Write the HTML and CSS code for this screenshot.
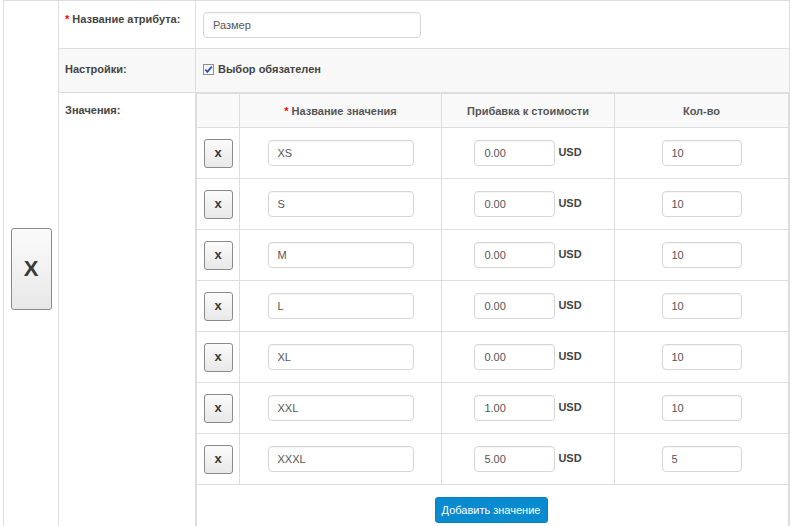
FILE: index.html
```html
<!DOCTYPE html>
<html lang="ru">
<head>
<meta charset="utf-8">
<title>Атрибут</title>
<link rel="stylesheet" href="styles.css">
</head>
<body>
<div class="page">
<table class="form">
  <colgroup><col class="c-del"><col class="c-label"><col class="c-field"></colgroup>
  <tbody>
    <tr class="row-name">
      <td class="del-cell" rowspan="3"><button class="btn btn-big" type="button">X</button></td>
      <td class="label"><span class="req">*</span> Название атрибута:</td>
      <td class="field"><input class="inp inp-attr" type="text" value="Размер"></td>
    </tr>
    <tr class="row-settings">
      <td class="label">Настройки:</td>
      <td class="field"><label class="check"><span class="checkbox"><svg width="9" height="9" viewBox="0 0 9 9"><path d="M1.3 4.6 L3.4 6.8 L7.8 1.6" fill="none" stroke="#2454c4" stroke-width="1.8"/></svg></span>Выбор обязателен</label></td>
    </tr>
    <tr class="row-values">
      <td class="label">Значения:</td>
      <td class="field values-cell">
        <table class="values">
          <colgroup><col class="v-del"><col class="v-name"><col class="v-price"><col class="v-qty"></colgroup>
          <thead>
            <tr><th></th><th><span class="req">*</span> Название значения</th><th>Прибавка к стоимости</th><th>Кол-во</th></tr>
          </thead>
          <tbody>
            <tr><td><button class="btn btn-small" type="button">x</button></td><td><input class="inp inp-name" type="text" value="XS"></td><td><span class="price"><input class="inp inp-price" type="text" value="0.00"><b>USD</b></span></td><td><input class="inp inp-qty" type="text" value="10"></td></tr>
            <tr><td><button class="btn btn-small" type="button">x</button></td><td><input class="inp inp-name" type="text" value="S"></td><td><span class="price"><input class="inp inp-price" type="text" value="0.00"><b>USD</b></span></td><td><input class="inp inp-qty" type="text" value="10"></td></tr>
            <tr><td><button class="btn btn-small" type="button">x</button></td><td><input class="inp inp-name" type="text" value="M"></td><td><span class="price"><input class="inp inp-price" type="text" value="0.00"><b>USD</b></span></td><td><input class="inp inp-qty" type="text" value="10"></td></tr>
            <tr><td><button class="btn btn-small" type="button">x</button></td><td><input class="inp inp-name" type="text" value="L"></td><td><span class="price"><input class="inp inp-price" type="text" value="0.00"><b>USD</b></span></td><td><input class="inp inp-qty" type="text" value="10"></td></tr>
            <tr><td><button class="btn btn-small" type="button">x</button></td><td><input class="inp inp-name" type="text" value="XL"></td><td><span class="price"><input class="inp inp-price" type="text" value="0.00"><b>USD</b></span></td><td><input class="inp inp-qty" type="text" value="10"></td></tr>
            <tr><td><button class="btn btn-small" type="button">x</button></td><td><input class="inp inp-name" type="text" value="XXL"></td><td><span class="price"><input class="inp inp-price" type="text" value="1.00"><b>USD</b></span></td><td><input class="inp inp-qty" type="text" value="10"></td></tr>
            <tr><td><button class="btn btn-small" type="button">x</button></td><td><input class="inp inp-name" type="text" value="XXXL"></td><td><span class="price"><input class="inp inp-price" type="text" value="5.00"><b>USD</b></span></td><td><input class="inp inp-qty" type="text" value="5"></td></tr>
          </tbody>
          <tfoot>
            <tr><td></td><td class="add-cell" colspan="3"><button class="btn-add" type="button">Добавить значение</button></td></tr>
          </tfoot>
        </table>
      </td>
    </tr>
  </tbody>
</table>
</div>
</body>
</html>
```
FILE: styles.css
```css
* { box-sizing: border-box; }
html, body { margin: 0; padding: 0; background: #fff; }
body {
  font-family: "Liberation Sans", Arial, sans-serif;
  font-size: 11px;
  color: #444;
}
.page { padding-left: 3px; }

.form {
  border-collapse: collapse;
  table-layout: fixed;
  width: 786px;
}
.c-del { width: 55px; }
.c-label { width: 137px; }
.c-field { width: 594px; }

.form > tbody > tr > td {
  border: 1px solid #dddddd;
  vertical-align: top;
  padding: 0;
}
.form .label {
  font-weight: bold;
  line-height: 15px;
  padding: 11px 6px 0;
}
.form .field { padding: 11px 7px 10px; }

.row-settings > td.label,
.row-settings > td.field { background: #f8f8f8; padding-top: 13px; padding-bottom: 15px; }
.row-values > td.label { padding-top: 10px; }
.form .values-cell { padding: 0; }

.del-cell { text-align: center; vertical-align: middle !important; }

.req { color: #ff0000; }

.btn {
  font-family: "Liberation Sans", Arial, sans-serif;
  font-weight: bold;
  color: #3a3a3a;
  border: 1px solid #8a8a8a;
  border-radius: 3px;
  background: linear-gradient(#fbfbfb, #e8e8e8);
  padding: 0;
  cursor: pointer;
}
.btn-big { width: 41px; height: 82px; font-size: 22px; }
.btn-small { width: 29px; height: 29px; font-size: 13px; line-height: 24px; }

.inp {
  font-family: "Liberation Sans", Arial, sans-serif;
  font-size: 11px;
  color: #555;
  height: 26px;
  border: 1px solid #d6d6d6;
  border-radius: 4px;
  padding: 0 9px;
  background: #fff;
  box-shadow: inset 0 1px 1px rgba(0,0,0,0.04);
  outline: none;
}
.inp-attr { width: 218px; display: block; }
.inp-name { width: 146px; }
.inp-price { width: 81px; }
.inp-qty { width: 80px; }

.check {
  display: flex;
  align-items: center;
  gap: 4px;
  font-weight: bold;
  line-height: 15px;
}
.checkbox {
  width: 11px;
  height: 11px;
  border: 1px solid #8e8f8f;
  background: linear-gradient(#f4f4f4, #ffffff);
  display: flex;
  align-items: center;
  justify-content: center;
}

.values {
  width: 100%;
  border-collapse: collapse;
  table-layout: fixed;
  border: 1px solid #dddddd;
}
.v-del { width: 43px; }
.v-name { width: 202px; }
.v-price { width: 173px; }
.v-qty { width: 174px; }

.values th {
  background: #f9f9f9;
  border: 1px solid #dddddd;
  height: 34px;
  font-weight: bold;
  color: #555;
  text-align: center;
  vertical-align: middle;
  padding: 0;
}
.values tbody td {
  border: 1px solid #dddddd;
  height: 51px;
  text-align: center;
  vertical-align: middle;
  padding: 0;
}
.values tfoot td {
  border: 1px solid #dddddd;
  border-right: 0;
  height: 51px;
  padding: 11px 0 12px;
  text-align: center;
}
.values tfoot td:first-child { border-right: 0; }
.values tfoot td.add-cell { border-left: 0; border-right: 1px solid #dddddd; text-align: left; padding-left: 195px; }

.price { display: inline-flex; align-items: center; gap: 3px; }
.price b { color: #444; font-size: 11px; margin-top: -3px; }

.btn-add {
  font-family: "Liberation Sans", Arial, sans-serif;
  font-size: 11px;
  color: #fff;
  background: #0a8bcf;
  border: 1px solid #0a7fbf;
  border-radius: 3px;
  width: 113px;
  height: 26px;
  padding: 0;
  cursor: pointer;
}
```
